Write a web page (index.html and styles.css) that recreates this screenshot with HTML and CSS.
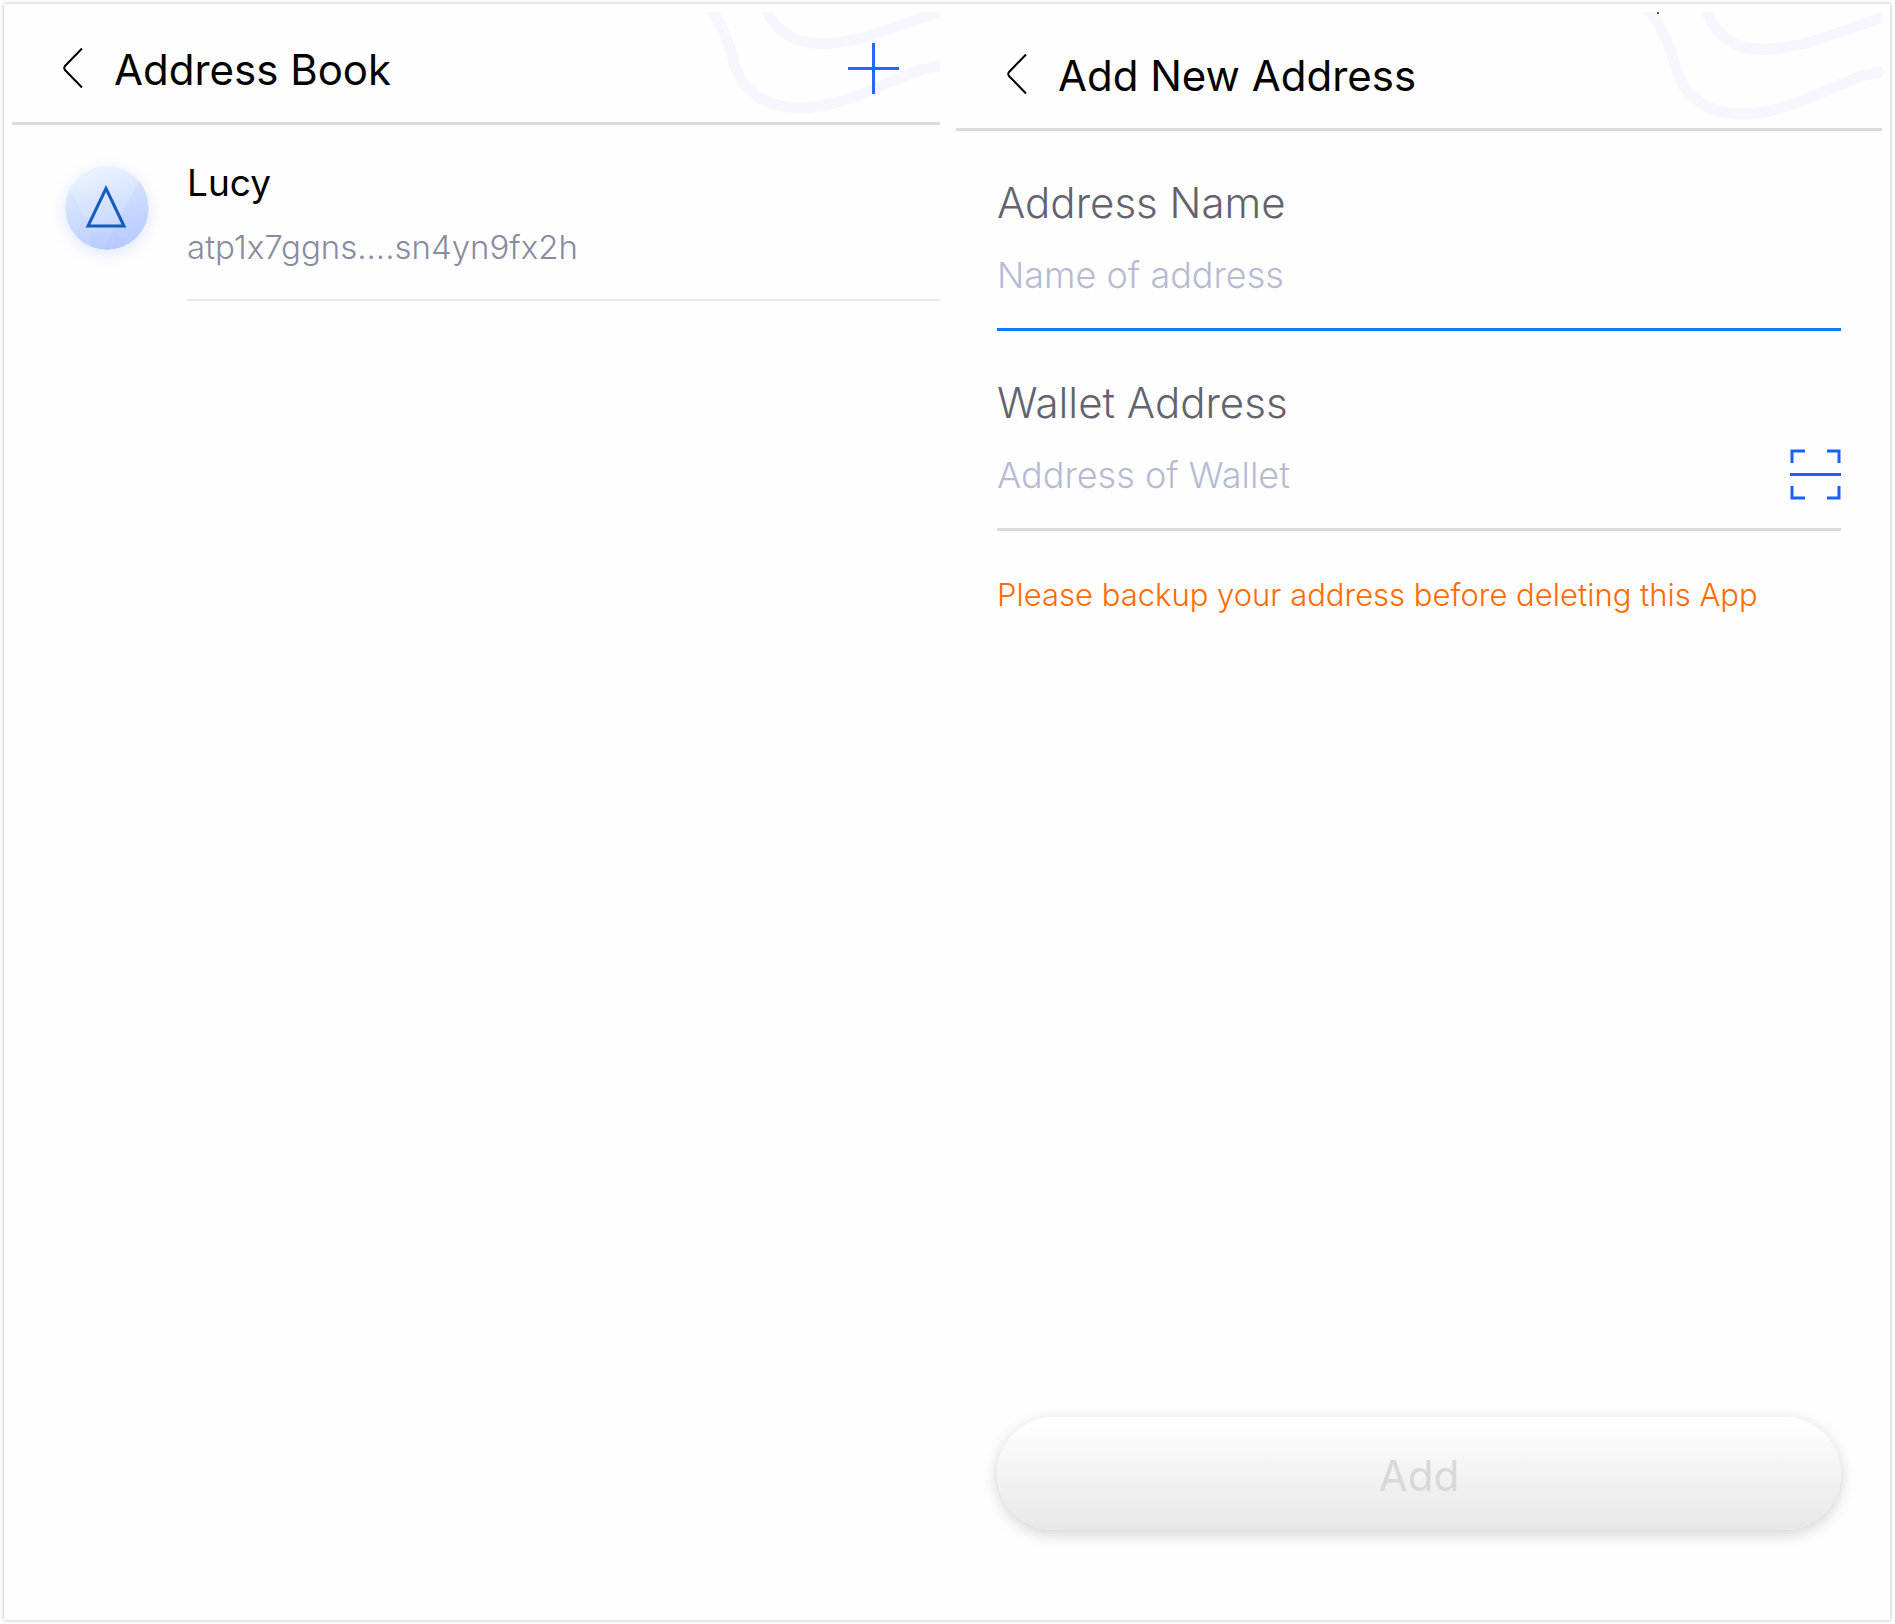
FILE: index.html
```html
<!DOCTYPE html>
<html lang="en">
<head>
<meta charset="utf-8">
<title>Address Book</title>
<link rel="stylesheet" href="styles.css">
</head>
<body>
<div class="board">
  <section class="screen">
    <header class="bar">
      <svg class="waves" viewBox="0 0 245 116" aria-hidden="true">
        <path d="M8 -5C26 14 33 34 38 53C46 86 72 102 105 102C160 102 205 63 250 59"/>
        <path d="M68 -5C76 20 94 37.500 126 37.500C166 37.500 205 18 250 4"/>
      </svg>
      <button class="icon-button" type="button" aria-label="Back">
        <svg class="back" viewBox="0 0 20 42"><path d="M19 1.500L2 19Q.5 21 2 23L19 40.500"/></svg>
      </button>
      <h1 class="title">Address Book</h1>
      <button class="icon-button add" type="button" aria-label="Add address">
        <svg class="plus" viewBox="0 0 51 51"><path d="M0 25.500H51M25.500 0V51"/></svg>
      </button>
    </header>
    <ul class="contacts">
      <li class="contact">
        <svg class="avatar" viewBox="0 0 84 84" aria-hidden="true">
          <defs>
            <linearGradient id="disc" x1=".35" y1="0" x2=".65" y2="1">
              <stop offset="0" stop-color="#ebf4ff"/>
              <stop offset="1" stop-color="#bccdff"/>
            </linearGradient>
            <clipPath id="round"><circle cx="42" cy="42" r="42"/></clipPath>
          </defs>
          <g clip-path="url(#round)">
            <rect width="84" height="84" fill="url(#disc)"/>
            <path d="M0 14L36 84H0z" fill="#b4c8ff" opacity=".15"/>
            <path d="M80 4L38 84H84z" fill="#a8bfff" opacity=".2"/>
            <path d="M27 66L22 84H62L52 66z" fill="#aec3ff" opacity=".2"/>
          </g>
          <path d="M41 22.500L23 60H59z" fill="none" stroke="#125cbe" stroke-width="3"/>
        </svg>
        <div class="details">
          <h2 class="name">Lucy</h2>
          <p class="account">atp1x7ggns....sn4yn9fx2h</p>
        </div>
      </li>
    </ul>
  </section>

  <section class="screen">
    <header class="bar bar-tall">
      <svg class="waves" viewBox="0 0 245 116" aria-hidden="true">
        <path d="M8 -5C26 14 33 34 38 53C46 86 72 102 105 102C160 102 205 63 250 59"/>
        <path d="M68 -5C76 20 94 37.500 126 37.500C166 37.500 205 18 250 4"/>
        <rect class="speck" x="20" y="0" width="2" height="2"/>
      </svg>
      <button class="icon-button" type="button" aria-label="Back">
        <svg class="back" viewBox="0 0 20 42"><path d="M19 1.500L2 19Q.5 21 2 23L19 40.500"/></svg>
      </button>
      <h1 class="title">Add New Address</h1>
    </header>
    <form class="form">
      <div class="field field-active">
        <label class="label" for="address-name">Address Name</label>
        <div class="entry">
          <input class="input" id="address-name" type="text" placeholder="Name of address">
        </div>
      </div>
      <div class="field">
        <label class="label" for="wallet-address">Wallet Address</label>
        <div class="entry">
          <input class="input" id="wallet-address" type="text" placeholder="Address of Wallet">
          <button class="icon-button" type="button" aria-label="Scan code">
            <svg class="scan" viewBox="0 0 51 51"><path d="M2 14V2H15M37 2H49V14M0 25.500H51M2 37V49H15M37 49H49V37"/></svg>
          </button>
        </div>
      </div>
      <p class="notice">Please backup your address before deleting this App</p>
      <button class="submit" type="submit" disabled>Add</button>
    </form>
  </section>
</div>
</body>
</html>
```

FILE: styles.css
```css
* {
  box-sizing: border-box;
}

body {
  margin: 0;
  padding: 4px 5px 4px 4px;
  background: #fff;
  color: #000;
  font-family: Inter, "Liberation Sans", sans-serif;
}

h1, h2, p, ul {
  margin: 0;
  padding: 0;
  font-weight: 400;
}

svg {
  display: block;
  fill: none;
}

.board {
  display: grid;
  grid-template-columns: 928fr 926fr;
  gap: 16px;
  min-height: calc(100vh - 8px);
  padding: 8px;
  background: #fefefe;
  box-shadow: 0 0 4px rgba(0, 0, 0, 0.3);
}

.screen {
  display: flex;
  flex-direction: column;
  min-width: 0;
}

.bar {
  position: relative;
  display: flex;
  align-items: center;
  height: 113px;
  padding: 2px 41px 0 51px;
  border-bottom: 3px solid #d8dbe2;
  overflow: hidden;
}

.bar-tall {
  height: 119px;
  padding-top: 8px;
}

.waves {
  position: absolute;
  right: 0;
  bottom: 0;
  width: 245px;
  height: 116px;
  stroke: #f5f6ff;
  stroke-width: 11;
}

.speck {
  fill: #555;
  stroke: none;
}

.icon-button {
  position: relative;
  flex: none;
  padding: 0;
  border: 0;
  background: none;
}

.back {
  width: 20px;
  height: 42px;
  stroke: #000;
  stroke-width: 2;
}

.title {
  position: relative;
  margin-left: 31px;
  padding-top: 4px;
  font-size: 42px;
  line-height: 52px;
}

.add {
  margin-left: auto;
}

.plus {
  width: 51px;
  height: 51px;
  stroke: #2368ff;
  stroke-width: 3;
}

.contacts {
  list-style: none;
}

.contact {
  display: flex;
  gap: 38px;
  padding: 32px 0 0 53px;
}

.avatar {
  flex: none;
  width: 84px;
  height: 84px;
  margin-top: 9px;
  border-radius: 50%;
  box-shadow: 0 4px 16px rgba(140, 165, 255, 0.25);
}

.details {
  flex: 1;
  height: 144px;
  border-bottom: 2px solid #e4e7f6;
}

.name {
  font-size: 37px;
  line-height: 52px;
}

.account {
  padding-top: 12px;
  color: #898ca0;
  font-size: 33px;
  font-weight: 300;
  font-feature-settings: "calt" 0;
  line-height: 52px;
}

.form {
  display: flex;
  flex: 1;
  flex-direction: column;
  padding: 0 41px 82px;
}

.field {
  height: 200px;
  padding-top: 46px;
  border-bottom: 3px solid #d8dbe2;
}

.field-active {
  border-bottom-color: #1478ff;
}

.label {
  display: block;
  color: #61646f;
  font-size: 42px;
  font-weight: 300;
  line-height: 52px;
}

.entry {
  display: flex;
  align-items: center;
  gap: 16px;
  height: 51px;
  margin-top: 20px;
}

.input {
  flex: 1;
  min-width: 0;
  height: 51px;
  padding: 0;
  border: 0;
  outline: 0;
  background: none;
  color: #61646f;
  font-family: inherit;
  font-size: 36px;
  font-weight: 300;
}

.input::placeholder {
  color: #b6bbd2;
  opacity: 1;
}

.scan {
  width: 51px;
  height: 51px;
  stroke: #1463ff;
  stroke-width: 3;
}

.notice {
  padding-top: 40px;
  color: #ff6c00;
  font-size: 31px;
  font-weight: 300;
  line-height: 48px;
}

.submit {
  height: 113px;
  margin-top: auto;
  padding: 4px 0 0;
  border: 0;
  border-radius: 57px;
  background: linear-gradient(#fff, #e7e7e7);
  box-shadow: 0 4px 16px rgba(0, 0, 0, 0.18);
  color: #d8d8d8;
  font-family: inherit;
  font-size: 42px;
}
```
